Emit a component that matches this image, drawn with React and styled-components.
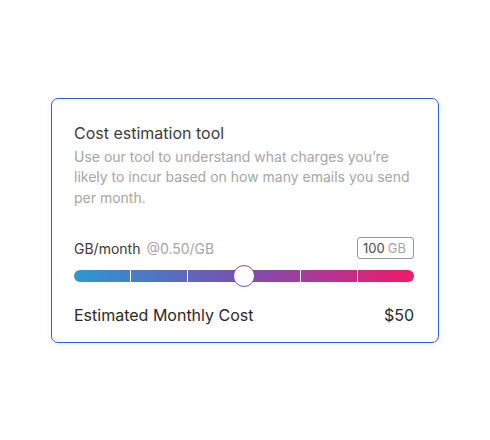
import React from "react"
import styled, { createGlobalStyle } from "styled-components"

const GlobalStyle = createGlobalStyle`
  body {
    margin: 0;
    font-family: Inter, "Noto Sans", sans-serif;
    background: #ffffff;
  }
`

const ticks = [1, 2, 3, 4, 5]

export default function App() {
  const value = 100
  const max = 200
  return (
    <>
      <GlobalStyle />
      <Page>
        <Card>
          <Title>Cost estimation tool</Title>
          <Description>
            Use our tool to understand what charges you’re likely to incur based on how many emails you send per month.
          </Description>
          <SliderHeader>
            <Label>
              GB/month <Rate>@0.50/GB</Rate>
            </Label>
            <ValueBox>
              {value}
              <Unit>GB</Unit>
            </ValueBox>
          </SliderHeader>
          <Track>
            {ticks.map((t) => (
              <Tick key={t} style={{ left: `${(t / 6) * 100}%` }} />
            ))}
            <Thumb style={{ left: `${(value / max) * 100}%` }} />
          </Track>
          <Footer>
            <span>Estimated Monthly Cost</span>
            <span>$50</span>
          </Footer>
        </Card>
      </Page>
    </>
  )
}

const Page = styled.div`
  min-height: 440px;
  display: flex;
  align-items: center;
  justify-content: center;
`

const Card = styled.div`
  box-sizing: border-box;
  width: 388px;
  height: 245px;
  border: 1px solid #2c5be4;
  border-radius: 7px;
  padding: 23px 24px 0 22px;
  box-shadow: 0 2px 8px rgba(0, 0, 0, 0.06);
  display: flex;
  flex-direction: column;
`

const Title = styled.div`
  font-size: 16px;
  color: #3c3c3c;
  line-height: 22px;
`

const Description = styled.div`
  margin-top: 3px;
  font-size: 14px;
  line-height: 20.5px;
  color: #a6a6a6;
`

const SliderHeader = styled.div`
  margin-top: 29px;
  display: flex;
  align-items: center;
  justify-content: space-between;
`

const Label = styled.div`
  font-size: 14px;
  color: #3a3a3a;
`

const Rate = styled.span`
  color: #a6a6a6;
  margin-left: 2px;
`

const ValueBox = styled.div`
  box-sizing: border-box;
  height: 22px;
  padding: 0 7px 0 5px;
  border: 1px solid #9a9a9a;
  border-radius: 3px;
  font-size: 13px;
  line-height: 20px;
  color: #4a4a4a;
`

const Unit = styled.span`
  color: #a6a6a6;
  margin-left: 3px;
`

const Track = styled.div`
  position: relative;
  margin-top: 11px;
  height: 12px;
  border-radius: 6px;
  background: linear-gradient(90deg, #2f98d2 0%, #5a6cbd 30%, #7a4fb0 50%, #b53490 75%, #f01a66 100%);
`

const Tick = styled.div`
  position: absolute;
  top: 0;
  bottom: 0;
  width: 1px;
  margin-left: -0.5px;
  background: #ffffff;
`

const Thumb = styled.div`
  position: absolute;
  top: 50%;
  width: 22px;
  height: 22px;
  box-sizing: border-box;
  border-radius: 50%;
  border: 1px solid #8c45ad;
  background: #ffffff;
  transform: translate(-50%, -50%);
`

const Footer = styled.div`
  margin-top: 23px;
  display: flex;
  justify-content: space-between;
  font-size: 16px;
  color: #2a2a2a;
`
